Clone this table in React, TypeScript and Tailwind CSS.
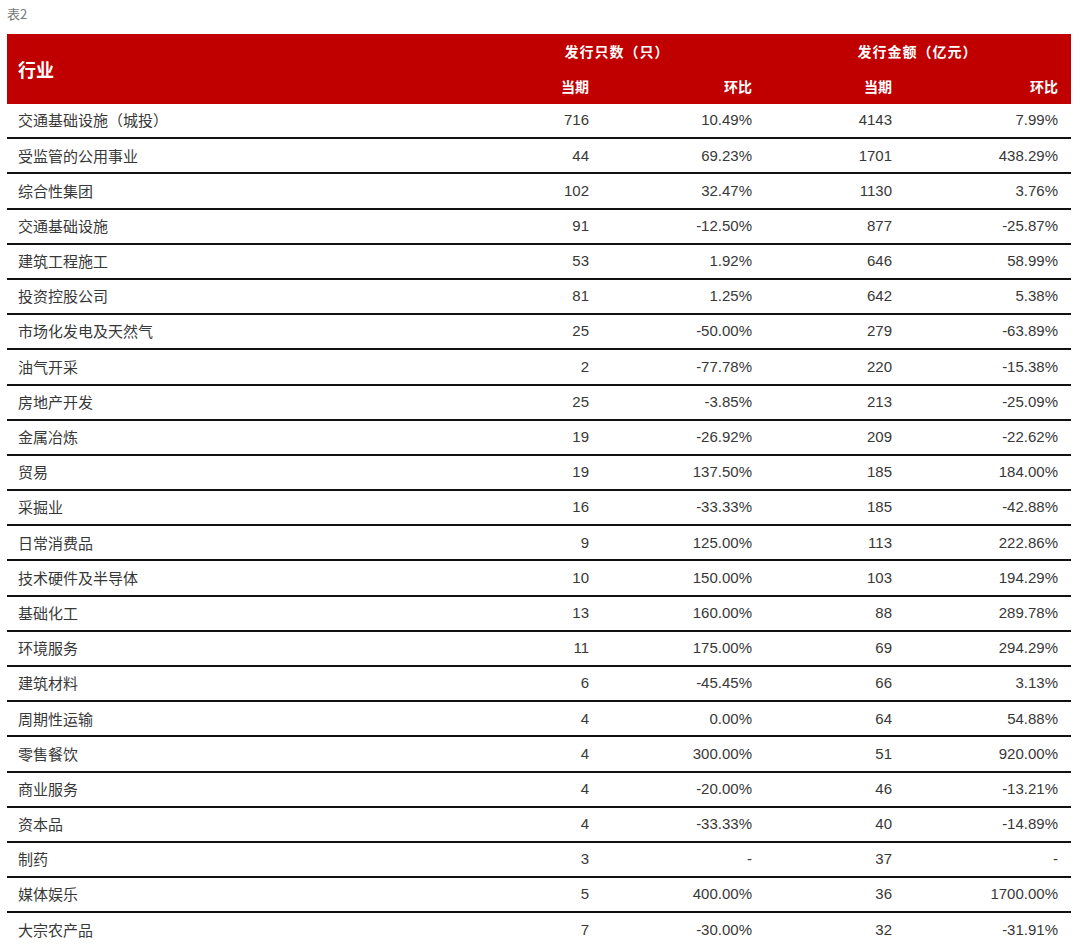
import React from 'react';

type Row = [string, string, string, string, string];

const rows: Row[] = [
  ['交通基础设施（城投）', '716', '10.49%', '4143', '7.99%'],
  ['受监管的公用事业', '44', '69.23%', '1701', '438.29%'],
  ['综合性集团', '102', '32.47%', '1130', '3.76%'],
  ['交通基础设施', '91', '-12.50%', '877', '-25.87%'],
  ['建筑工程施工', '53', '1.92%', '646', '58.99%'],
  ['投资控股公司', '81', '1.25%', '642', '5.38%'],
  ['市场化发电及天然气', '25', '-50.00%', '279', '-63.89%'],
  ['油气开采', '2', '-77.78%', '220', '-15.38%'],
  ['房地产开发', '25', '-3.85%', '213', '-25.09%'],
  ['金属冶炼', '19', '-26.92%', '209', '-22.62%'],
  ['贸易', '19', '137.50%', '185', '184.00%'],
  ['采掘业', '16', '-33.33%', '185', '-42.88%'],
  ['日常消费品', '9', '125.00%', '113', '222.86%'],
  ['技术硬件及半导体', '10', '150.00%', '103', '194.29%'],
  ['基础化工', '13', '160.00%', '88', '289.78%'],
  ['环境服务', '11', '175.00%', '69', '294.29%'],
  ['建筑材料', '6', '-45.45%', '66', '3.13%'],
  ['周期性运输', '4', '0.00%', '64', '54.88%'],
  ['零售餐饮', '4', '300.00%', '51', '920.00%'],
  ['商业服务', '4', '-20.00%', '46', '-13.21%'],
  ['资本品', '4', '-33.33%', '40', '-14.89%'],
  ['制药', '3', '-', '37', '-'],
  ['媒体娱乐', '5', '400.00%', '36', '1700.00%'],
  ['大宗农产品', '7', '-30.00%', '32', '-31.91%'],
];

const cols = 'grid grid-cols-[463px_131px_163px_140px_167px]';
const cjk = "font-['Noto_Sans_CJK_SC',sans-serif]";
const num = "font-['Liberation_Sans','Noto_Sans_CJK_SC',sans-serif]";

export default function App() {
  return (
    <div className="h-[944px] w-[1080px] overflow-hidden bg-white">
      <p className={`h-[34px] pl-[7px] pt-[4px] text-[13px] text-[#777] ${cjk}`}>表2</p>

      <div className="ml-[7px] w-[1064px]">
        {/* header */}
        <div className={`${cols} h-[70px] grid-rows-[35px_35px] bg-[#c00000] text-white ${cjk}`}>
          <div className="row-span-2 flex items-center pl-[11px] text-[18px] font-bold">行业</div>
          <div className="col-span-2 flex items-center justify-center text-[14px] font-bold tracking-[1px]">发行只数（只）</div>
          <div className="col-span-2 flex items-center justify-center text-[14px] font-bold tracking-[1px]">发行金额（亿元）</div>
          <div className="flex items-center justify-end pr-[12px] text-[14px] font-bold">当期</div>
          <div className="flex items-center justify-end pr-[12px] text-[14px] font-bold">环比</div>
          <div className="flex items-center justify-end pr-[12px] text-[14px] font-bold">当期</div>
          <div className="flex items-center justify-end pr-[13px] text-[14px] font-bold">环比</div>
        </div>

        {/* body */}
        {rows.map((r) => (
          <div key={r[0]} className={`${cols} h-[35.2px] border-b-2 border-[#111] text-[15px] text-[#383838]`}>
            <div className={`flex items-center pl-[11px] ${cjk}`}>{r[0]}</div>
            <div className={`flex items-center justify-end pr-[12px] ${num}`}>{r[1]}</div>
            <div className={`flex items-center justify-end pr-[12px] ${num}`}>{r[2]}</div>
            <div className={`flex items-center justify-end pr-[12px] ${num}`}>{r[3]}</div>
            <div className={`flex items-center justify-end pr-[13px] ${num}`}>{r[4]}</div>
          </div>
        ))}
      </div>
    </div>
  );
}
